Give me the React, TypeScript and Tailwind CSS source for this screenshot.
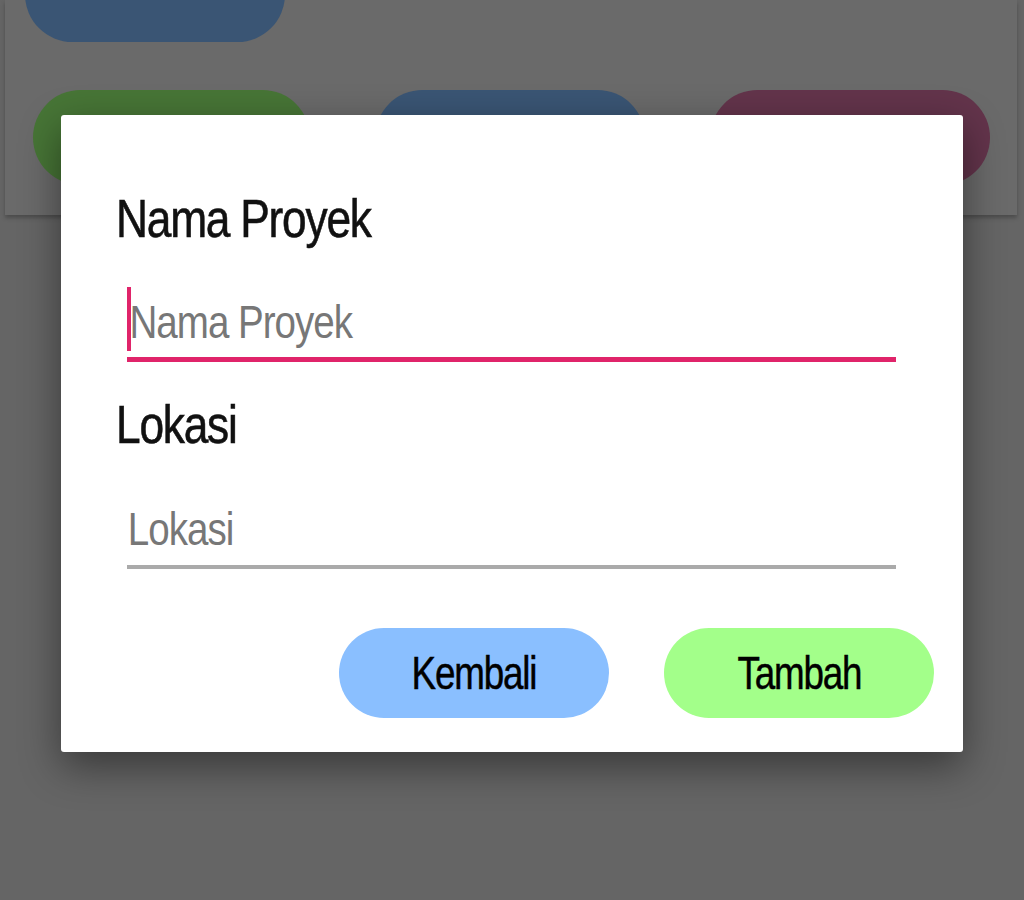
import React from 'react';

const font = { fontFamily: '"Liberation Sans", Arial, sans-serif' };

const App: React.FC = () => {
  return (
    <div className="relative w-[1024px] h-[900px] overflow-hidden bg-[#656565]" style={font}>
      {/* page behind the dialog, already dimmed */}
      <div className="ml-[5px] mr-[7px] h-[215px] flex flex-col bg-[#6a6a6a] shadow-[0_3px_4px_rgba(0,0,0,0.25)] pl-[20px] pr-[27px]">
        <div className="w-[260px] h-[95px] -mt-[53px] rounded-full bg-[#3a5574]" />
        <div className="flex justify-between mt-[48px] pl-[8px]">
          <div className="w-[277px] h-[95px] rounded-full bg-[#477536]" />
          <div className="w-[270px] h-[95px] rounded-full bg-[#3a5574]" />
          <div className="w-[280px] h-[95px] rounded-full bg-[#63344b]" />
        </div>
      </div>

      {/* dialog */}
      <div className="absolute inset-0 flex justify-center pt-[115px]">
        <div className="w-[902px] h-[637px] bg-white rounded-[3px] shadow-[0_14px_40px_rgba(0,0,0,0.45)] pl-[55px] pr-[67px] pt-[76px] flex flex-col">
          <label className="text-[54px] leading-[54px] text-[#111] tracking-[-1.5px] scale-x-[0.82] origin-left [-webkit-text-stroke:0.6px_#111]">
            Nama Proyek
          </label>
          <div className="relative ml-[11px] mt-[42px] h-[75px] border-b-[5px] border-[#e0246a] flex items-end pb-[12px]">
            <div className="absolute left-0 top-0 w-[4px] h-[64px] bg-[#e0246a]" />
            <span className="block text-[47px] leading-[47px] text-[#777] tracking-[-1.2px] scale-x-[0.82] origin-left pl-[3px]">
              Nama Proyek
            </span>
          </div>
          <label className="mt-[35px] text-[54px] leading-[54px] text-[#111] tracking-[-1.5px] scale-x-[0.82] origin-left [-webkit-text-stroke:0.6px_#111]">
            Lokasi
          </label>
          <div className="ml-[11px] h-[118px] border-b-[4px] border-[#aaaaaa] flex items-end pb-[13px]">
            <span className="block text-[47px] leading-[47px] text-[#777] tracking-[-1.2px] scale-x-[0.82] origin-left pl-[1px]">
              Lokasi
            </span>
          </div>
          <div className="flex justify-end gap-[55px] mt-[59px] -mr-[38px]">
            <button className="w-[270px] h-[90px] rounded-full bg-[#8abfff] flex items-center justify-center">
              <span className="block text-[46px] leading-[46px] text-black tracking-[-1.5px] scale-x-[0.8] [-webkit-text-stroke:0.5px_#000]">
                Kembali
              </span>
            </button>
            <button className="w-[270px] h-[90px] rounded-full bg-[#a3ff8a] flex items-center justify-center">
              <span className="block text-[46px] leading-[46px] text-black tracking-[-1.5px] scale-x-[0.8] [-webkit-text-stroke:0.5px_#000]">
                Tambah
              </span>
            </button>
          </div>
        </div>
      </div>
    </div>
  );
};

export default App;
